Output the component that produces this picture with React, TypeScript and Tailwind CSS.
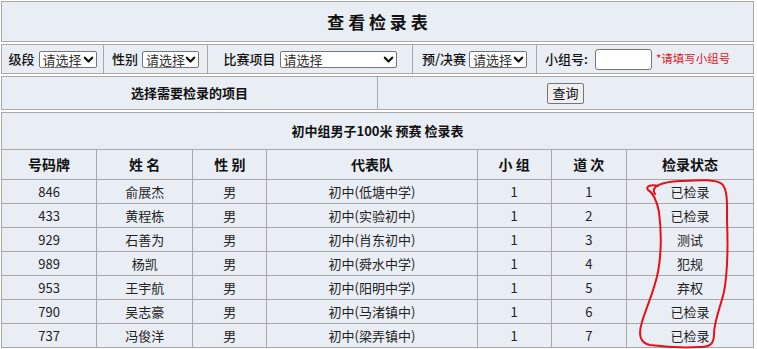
import React from "react";

const FONT = { fontFamily: '"Microsoft YaHei", "Noto Sans CJK SC", "Noto Sans", sans-serif' };

function Chevron() {
  return (
    <svg width="11" height="11" viewBox="0 0 12 12" className="shrink-0">
      <path d="M2 4 L6 8.2 L10 4" fill="none" stroke="#111" strokeWidth="2.4" strokeLinecap="round" strokeLinejoin="round" />
    </svg>
  );
}

function FakeSelect({ w }: { w: string }) {
  return (
    <div className={`flex h-[17px] ${w} items-center justify-between rounded-[2px] border border-[#767676] bg-white pl-[3px] pr-[2px] text-[13px] leading-none text-[#333]`}>
      <span className="font-normal">请选择</span>
      <Chevron />
    </div>
  );
}

const rows = [
  ["846", "俞展杰", "男", "初中(低塘中学)", "1", "1", "已检录"],
  ["433", "黄程栋", "男", "初中(实验初中)", "1", "2", "已检录"],
  ["929", "石善为", "男", "初中(肖东初中)", "1", "3", "测试"],
  ["989", "杨凯", "男", "初中(舜水中学)", "1", "4", "犯规"],
  ["953", "王宇航", "男", "初中(阳明中学)", "1", "5", "弃权"],
  ["790", "吴志豪", "男", "初中(马渚镇中)", "1", "6", "已检录"],
  ["737", "冯俊洋", "男", "初中(梁弄镇中)", "1", "7", "已检录"],
];

const headers = ["号码牌", "姓 名", "性 别", "代表队", "小 组", "道 次", "检录状态"];
const widths = ["w-[95px]", "w-[96px]", "w-[74px]", "w-[210px]", "w-[74px]", "w-[75px]", "w-[127px]"];

export default function App() {
  return (
    <div className="relative h-[349px] w-[757px] overflow-hidden bg-white text-[#222]" style={FONT}>
      <div className="flex w-[754px] flex-col gap-[2px] pl-[1px] pt-[1px]">
        {/* Title */}
        <div className="flex h-[41px] items-center justify-center border border-[#a9a9a9] bg-[#e9eef4]">
          <span className="text-[17px] font-bold text-[#111]">查 看 检 录 表</span>
        </div>

        {/* Filters */}
        <div className="flex h-[30px] border border-[#a9a9a9] bg-[#e9eef4] text-[13px] font-medium text-[#111]">
          <div className="flex w-[102px] items-center justify-center gap-[4px] border-r border-[#a9a9a9]">
            <span>级段</span>
            <FakeSelect w="w-[58px]" />
          </div>
          <div className="flex w-[104px] items-center justify-center gap-[4px] border-r border-[#a9a9a9]">
            <span>性别</span>
            <FakeSelect w="w-[57px]" />
          </div>
          <div className="flex w-[205px] items-center justify-center gap-[4px] border-r border-[#a9a9a9]">
            <span>比赛项目</span>
            <FakeSelect w="w-[117px]" />
          </div>
          <div className="flex w-[124px] items-center justify-center gap-[3px] border-r border-[#a9a9a9]">
            <span>预/决赛</span>
            <FakeSelect w="w-[58px]" />
          </div>
          <div className="flex flex-1 items-center pl-[8px]">
            <span>小组号:</span>
            <div className="ml-[7px] h-[21px] w-[57px] rounded-[3px] border border-[#767676] bg-white" />
            <span className="ml-[4px] text-[11.5px] font-normal text-[#e3141c]">*请填写小组号</span>
          </div>
        </div>

        {/* Button row */}
        <div className="flex h-[34px] border border-[#a9a9a9] bg-[#e9eef4]">
          <div className="flex w-[376px] items-center justify-center border-r border-[#a9a9a9] text-[13px] font-bold text-[#111]">
            选择需要检录的项目
          </div>
          <div className="flex flex-1 items-center justify-center">
            <div className="flex h-[21px] w-[37px] items-center justify-center rounded-[2px] border border-[#767676] bg-[#efefef] text-[13px] text-[#111]">
              查询
            </div>
          </div>
        </div>

        {/* Results */}
        <table className="w-[753px] table-fixed border-collapse border border-[#a9a9a9] bg-[#e9eef4] text-[13px]">
          <colgroup>
            {widths.map((w, i) => (
              <col key={i} className={w} />
            ))}
          </colgroup>
          <tbody>
            <tr>
              <td colSpan={7} className="h-[37px] border border-[#a9a9a9] text-center font-bold text-[#111]">
                初中组男子100米 预赛 检录表
              </td>
            </tr>
            <tr>
              {headers.map((h) => (
                <td key={h} className="h-[30px] border border-[#a9a9a9] text-center text-[14px] font-bold text-[#111]">
                  {h}
                </td>
              ))}
            </tr>
            {rows.map((r) => (
              <tr key={r[0]}>
                {r.map((c, i) => (
                  <td key={i} className="h-[24px] border border-[#a9a9a9] p-0 text-center leading-none text-[#222]">
                    {c}
                  </td>
                ))}
              </tr>
            ))}
          </tbody>
        </table>
      </div>

      {/* Hand-drawn red annotation */}
      <svg className="pointer-events-none absolute left-0 top-0" width="757" height="349" viewBox="0 0 757 349">
        <path
          d="M655 194 C 650 186, 662 182, 680 181 C 700 180, 716 179, 722 184 C 728 190, 727 205, 727 220 C 728 245, 728 270, 724 292 C 720 308, 714 322, 714 334 C 714 342, 712 347, 700 347 C 685 348, 665 347, 650 345 C 640 343, 638 335, 642 322 C 646 308, 654 292, 658 272 C 662 250, 661 228, 659 212 C 657 200, 652 192, 648 190 C 645 186, 652 184, 658 186"
          fill="none"
          stroke="#e4101a"
          strokeWidth="2"
          strokeLinecap="round"
          strokeLinejoin="round"
        />
      </svg>
    </div>
  );
}
